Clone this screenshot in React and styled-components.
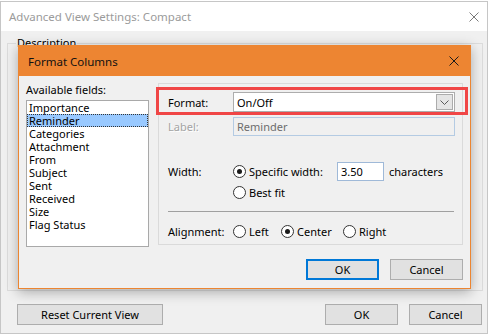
import styled, { createGlobalStyle } from "styled-components";

const GlobalStyle = createGlobalStyle`
  html, body {
    margin: 0;
    padding: 0;
    background: #fff;
  }
  body {
    font-family: "Noto Sans", "Segoe UI", sans-serif;
    font-size: 11px;
    color: #000;
  }
  * {
    box-sizing: border-box;
  }
`;

const fields = [
  "Importance",
  "Reminder",
  "Categories",
  "Attachment",
  "From",
  "Subject",
  "Sent",
  "Received",
  "Size",
  "Flag Status",
];

function CloseIcon({ color }) {
  return (
    <svg width="10" height="10" viewBox="0 0 10 10">
      <path d="M0.5 0.5 L9.5 9.5 M9.5 0.5 L0.5 9.5" stroke={color} strokeWidth="1" fill="none" />
    </svg>
  );
}

function Radio({ checked, label, width }) {
  return (
    <RadioOption $width={width}>
      <RadioCircle $checked={checked} />
      <span>{label}</span>
    </RadioOption>
  );
}

export default function App() {
  return (
    <Screen>
      <GlobalStyle />
      <Window>
        <WindowTitle>
          <span>Advanced View Settings: Compact</span>
          <CloseIcon color="#7a7a7a" />
        </WindowTitle>
        <WindowBody>
          <GroupBox>
            <legend>Description</legend>
          </GroupBox>
          <BottomBar>
            <Button $width={146}>Reset Current View</Button>
            <ButtonGroup>
              <Button $width={73}>OK</Button>
              <Button $width={73}>Cancel</Button>
            </ButtonGroup>
          </BottomBar>
        </WindowBody>
      </Window>

      <Dialog>
        <DialogTitle>
          <span>Format Columns</span>
          <CloseIcon color="#1a1a1a" />
        </DialogTitle>
        <DialogBody>
          <FieldsColumn>
            <FieldsLabel>Available fields:</FieldsLabel>
            <ListBox>
              {fields.map((f) => (
                <ListItem key={f} $selected={f === "Reminder"}>
                  {f}
                </ListItem>
              ))}
            </ListBox>
          </FieldsColumn>

          <RightColumn>
            <Panel>
              <Highlight />
              <Row $mt={8} $h={20}>
                <FieldLabel>Format:</FieldLabel>
                <Dropdown>
                  <span>On/Off</span>
                  <DropButton>
                    <svg width="9" height="5" viewBox="0 0 9 5">
                      <polyline points="0.5,0.5 4.5,4.5 8.5,0.5" fill="none" stroke="#5a5a5a" strokeWidth="1" />
                    </svg>
                  </DropButton>
                </Dropdown>
              </Row>
              <Row $mt={5} $h={19}>
                <FieldLabel $disabled>Label:</FieldLabel>
                <TextBox $width={222} $disabled>
                  Reminder
                </TextBox>
              </Row>
              <Row $mt={26} $h={19}>
                <FieldLabel>Width:</FieldLabel>
                <Radio checked label="Specific width:" width={104} />
                <TextBox $width={47}>3.50</TextBox>
                <Suffix>characters</Suffix>
              </Row>
              <Row $mt={5} $h={13} $indent={65}>
                <Radio label="Best fit" />
              </Row>
              <Separator />
              <Row $mt={13} $h={13}>
                <FieldLabel>Alignment:</FieldLabel>
                <Radio label="Left" width={48} />
                <Radio checked label="Center" width={62} />
                <Radio label="Right" />
              </Row>
            </Panel>
            <DialogButtons>
              <Button $width={73} $default>
                OK
              </Button>
              <Button $width={73}>Cancel</Button>
            </DialogButtons>
          </RightColumn>
        </DialogBody>
      </Dialog>
    </Screen>
  );
}

const Screen = styled.div`
  position: relative;
  width: 489px;
  height: 334px;
  overflow: hidden;
  padding-top: 1px;
  background: #fff;
`;

const Window = styled.div`
  width: 488px;
  height: 333px;
  border: 1px solid #c6c6c6;
  display: flex;
  flex-direction: column;
  background: #f0f0f0;
`;

const WindowTitle = styled.div`
  height: 29px;
  flex-shrink: 0;
  background: #fff;
  display: flex;
  align-items: center;
  justify-content: space-between;
  padding: 0 8px 0 8px;
  font-size: 11.5px;
  color: #9b9b9b;
`;

const WindowBody = styled.div`
  flex: 1;
  display: flex;
  flex-direction: column;
  padding: 4px 4px 0 6px;
`;

const GroupBox = styled.fieldset`
  height: 256px;
  margin: 0;
  padding: 0;
  border: 1px solid #dcdcdc;
  min-width: 0;

  legend {
    margin-left: 8px;
    padding: 0 1px;
    line-height: 16px;
  }
`;

const BottomBar = styled.div`
  display: flex;
  justify-content: space-between;
  margin-top: 13px;
  padding: 0 1px 0 10px;
`;

const ButtonGroup = styled.div`
  display: flex;
  gap: 11px;
`;

const Button = styled.button`
  width: ${(p) => p.$width}px;
  height: 21px;
  padding: 0;
  font: inherit;
  color: #000;
  background: #e1e1e1;
  border: ${(p) => (p.$default ? "2px solid #0078d7" : "1px solid #adadad")};
`;

const Dialog = styled.div`
  position: absolute;
  left: 18px;
  top: 45px;
  width: 453px;
  height: 244px;
  border: 1px solid #ec8531;
  background: #f0f0f0;
  box-shadow: 0 3px 12px rgba(0, 0, 0, 0.3);
  display: flex;
  flex-direction: column;
`;

const DialogTitle = styled.div`
  height: 30px;
  flex-shrink: 0;
  background: #ed8532;
  display: flex;
  align-items: center;
  justify-content: space-between;
  padding: 0 11px 0 9px;
  font-size: 11.5px;
  color: #111;
`;

const DialogBody = styled.div`
  flex: 1;
  display: grid;
  grid-template-columns: 123px 1fr;
  column-gap: 9px;
  padding: 7px 7px 0 7px;
`;

const FieldsColumn = styled.div`
  display: flex;
  flex-direction: column;
`;

const FieldsLabel = styled.div`
  line-height: 14px;
  margin-bottom: 3px;
`;

const ListBox = styled.div`
  height: 147px;
  background: #fff;
  border: 1px solid #a9a9a9;
`;

const ListItem = styled.div`
  height: 13px;
  line-height: 13px;
  padding-left: 2px;
  background: ${(p) => (p.$selected ? "#99c9ff" : "transparent")};
  outline: ${(p) => (p.$selected ? "1px dotted #333" : "none")};
  outline-offset: -1px;
`;

const RightColumn = styled.div`
  display: flex;
  flex-direction: column;
`;

const Panel = styled.div`
  position: relative;
  height: 162px;
  border: 1px solid #dadada;
  padding: 0 7px 0 9px;
  display: flex;
  flex-direction: column;
`;

const Highlight = styled.div`
  position: absolute;
  left: -3px;
  top: 3px;
  width: 312px;
  height: 28px;
  border: 3px solid #f04646;
  pointer-events: none;
`;

const Row = styled.div`
  display: flex;
  align-items: center;
  height: ${(p) => p.$h}px;
  margin-top: ${(p) => p.$mt}px;
  padding-left: ${(p) => p.$indent || 0}px;
  white-space: nowrap;
`;

const FieldLabel = styled.span`
  width: 65px;
  flex-shrink: 0;
  color: ${(p) => (p.$disabled ? "#a3a3a3" : "#000")};
  text-shadow: ${(p) => (p.$disabled ? "1px 1px 0 #fff" : "none")};
`;

const Dropdown = styled.div`
  width: 222px;
  height: 20px;
  display: flex;
  align-items: center;
  background: #fff;
  border: 1px solid #adadad;
  padding-left: 3px;
`;

const DropButton = styled.div`
  margin: 0 1px 0 auto;
  width: 17px;
  height: 16px;
  display: flex;
  align-items: center;
  justify-content: center;
  background: #e5e5e5;
  border: 1px solid #acacac;
`;

const TextBox = styled.div`
  width: ${(p) => p.$width}px;
  height: 19px;
  line-height: 17px;
  padding-left: 3px;
  background: ${(p) => (p.$disabled ? "#f0f0f0" : "#fff")};
  border: 1px solid ${(p) => (p.$disabled ? "#b4cbe3" : "#9fb9d8")};
  color: ${(p) => (p.$disabled ? "#6d6d6d" : "#000")};
`;

const Suffix = styled.span`
  margin-left: 5px;
`;

const RadioOption = styled.label`
  display: flex;
  align-items: center;
  gap: 3px;
  width: ${(p) => (p.$width ? `${p.$width}px` : "auto")};
  flex-shrink: 0;
`;

const RadioCircle = styled.span`
  position: relative;
  width: 13px;
  height: 13px;
  border-radius: 50%;
  border: 1px solid #333;
  background: #fff;
  flex-shrink: 0;

  &::after {
    content: "";
    display: ${(p) => (p.$checked ? "block" : "none")};
    position: absolute;
    left: 3px;
    top: 3px;
    width: 5px;
    height: 5px;
    border-radius: 50%;
    background: #1a1a1a;
  }
`;

const Separator = styled.div`
  width: 286px;
  height: 1px;
  margin-top: 12px;
  background: #a0a0a0;
`;

const DialogButtons = styled.div`
  display: flex;
  justify-content: flex-end;
  gap: 11px;
  margin-top: 14px;
`;
